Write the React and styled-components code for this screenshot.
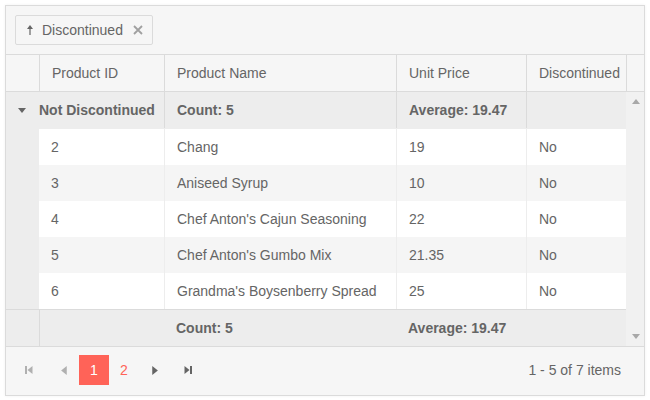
import React from "react";
import styled, { createGlobalStyle } from "styled-components";

const Global = createGlobalStyle`
  html, body { margin: 0; padding: 0; background: #fff; }
  body { padding: 5px; font-family: "Liberation Sans", Arial, sans-serif; font-size: 14px; color: #656565; }
  * { box-sizing: border-box; }
`;

const COLS = "33px 125px 232px 130px 100px";

const Grid = styled.div`
  width: 640px;
  height: 391px;
  border: 1px solid #dbdbdb;
  background: #fff;
  display: flex;
  flex-direction: column;
  box-shadow: 0 0 3px rgba(0,0,0,0.06);
`;

const GroupBar = styled.div`
  height: 49px;
  padding: 9px 9px;
  background: #f6f6f6;
  border-bottom: 1px solid #dbdbdb;
  display: flex;
  align-items: flex-start;
`;

const Chip = styled.div`
  height: 30px;
  width: 138px;
  border: 1px solid #dbdbdb;
  border-radius: 2px;
  background: #f6f6f6;
  display: flex;
  align-items: center;
  padding-left: 10px;
`;

const ChipText = styled.span`
  margin-left: 8px;
  margin-right: 9px;
  color: #656565;
`;

const HeaderRow = styled.div`
  height: 37px;
  display: flex;
  background: #f6f6f6;
  border-bottom: 1px solid #dbdbdb;
`;

const HeadCells = styled.div`
  display: grid;
  grid-template-columns: ${COLS};
  width: 620px;
`;

const HeadCell = styled.div`
  display: flex;
  align-items: center;
  padding-left: 12px;
  border-left: ${(p) => (p.$first ? "none" : "1px solid #dbdbdb")};
  color: #656565;
  white-space: nowrap;
  overflow: hidden;
`;

const HeadScrollSpacer = styled.div`
  width: 18px;
  border-left: 1px solid #dbdbdb;
`;

const Body = styled.div`
  height: 254px;
  display: flex;
`;

const Rows = styled.div`
  width: 620px;
  display: flex;
  flex-direction: column;
`;

const Row = styled.div`
  display: grid;
  grid-template-columns: ${(p) => p.$cols || COLS};
  height: ${(p) => p.$h || 36}px;
  padding-bottom: ${(p) => p.$pb || 0}px;
  background: ${(p) => p.$bg || "#fff"};
  border-top: ${(p) => (p.$topBorder ? "1px solid #dbdbdb" : "none")};
`;

const Cell = styled.div`
  display: flex;
  align-items: center;
  padding-left: ${(p) => (p.$pad ?? 12)}px;
  border-left: ${(p) => (p.$noBorder ? "none" : `1px solid ${p.$bc || "#ededed"}`)};
  background: ${(p) => p.$bg || "transparent"};
  font-weight: ${(p) => (p.$bold ? 700 : 400)};
  white-space: nowrap;
  overflow: hidden;
  color: #656565;
`;

const Scrollbar = styled.div`
  width: 18px;
  background: #f1f1f1;
  display: flex;
  flex-direction: column;
  justify-content: space-between;
  align-items: center;
  padding: 6px 0 6px 2px;
`;

const Pager = styled.div`
  height: 49px;
  border-top: 1px solid #dbdbdb;
  background: #f6f6f6;
  display: flex;
  align-items: center;
  padding: 0 23px 2px 8px;
`;

const PagerNav = styled.div`
  display: flex;
  align-items: center;
`;

const NavButton = styled.div`
  width: 30px;
  height: 30px;
  display: flex;
  align-items: center;
  justify-content: center;
  margin-right: ${(p) => p.$mr || 0}px;
`;

const PageNum = styled.div`
  width: 30px;
  height: 30px;
  display: flex;
  align-items: center;
  justify-content: center;
  font-size: 14px;
  background: ${(p) => (p.$active ? "#ff6358" : "transparent")};
  color: ${(p) => (p.$active ? "#fff" : "#ff6358")};
`;

const PagerInfo = styled.div`
  margin-left: auto;
  color: #656565;
`;

const GroupLabel = styled.span`
  margin-left: 13px;
`;

const ArrowUp = () => (
  <svg width="8" height="12" viewBox="0 0 8 12">
    <path d="M4 1 L1 5 L3.4 5 L3.4 11 L4.6 11 L4.6 5 L7 5 Z" fill="#656565" />
  </svg>
);

const Close = () => (
  <svg width="12" height="12" viewBox="0 0 12 12">
    <path d="M2 2 L10 10 M10 2 L2 10" stroke="#a0a0a0" strokeWidth="1.8" />
  </svg>
);

const Tri = ({ dir = "down", color = "#656565", size = 8 }) => {
  const paths = {
    down: "M0 2 L8 2 L4 7 Z",
    up: "M0 6 L8 6 L4 1 Z",
    left: "M6 0 L6 8 L1 4 Z",
    right: "M2 0 L2 8 L7 4 Z",
  };
  return (
    <svg width={size} height={size} viewBox="0 0 8 8">
      <path d={paths[dir]} fill={color} />
    </svg>
  );
};

const FirstIcon = ({ color }) => (
  <svg width="10" height="10" viewBox="0 0 10 10">
    <rect x="1" y="1" width="2" height="8" fill={color} />
    <path d="M8.5 1 L8.5 9 L3.5 5 Z" fill={color} />
  </svg>
);
const LastIcon = ({ color }) => (
  <svg width="10" height="10" viewBox="0 0 10 10">
    <rect x="7" y="1" width="2" height="8" fill={color} />
    <path d="M1.5 1 L1.5 9 L6.5 5 Z" fill={color} />
  </svg>
);

const data = [
  { id: 2, name: "Chang", price: "19", disc: "No" },
  { id: 3, name: "Aniseed Syrup", price: "10", disc: "No" },
  { id: 4, name: "Chef Anton's Cajun Seasoning", price: "22", disc: "No" },
  { id: 5, name: "Chef Anton's Gumbo Mix", price: "21.35", disc: "No" },
  { id: 6, name: "Grandma's Boysenberry Spread", price: "25", disc: "No" },
];

export default function App() {
  return (
    <>
      <Global />
      <Grid>
        <GroupBar>
          <Chip>
            <ArrowUp />
            <ChipText>Discontinued</ChipText>
            <Close />
          </Chip>
        </GroupBar>
        <HeaderRow>
          <HeadCells>
            <HeadCell $first />
            <HeadCell>Product ID</HeadCell>
            <HeadCell>Product Name</HeadCell>
            <HeadCell>Unit Price</HeadCell>
            <HeadCell>Discontinued</HeadCell>
          </HeadCells>
          <HeadScrollSpacer />
        </HeaderRow>
        <Body>
          <Rows>
            <Row $bg="#ededed" $h={37} $pb={1} $cols="158px 232px 130px 100px">
              <Cell $noBorder $pad={12} $bold>
                <Tri dir="down" color="#656565" />
                <GroupLabel>Not Discontinued</GroupLabel>
              </Cell>
              <Cell $bold $bc="#dbdbdb">Count: 5</Cell>
              <Cell $bold $bc="#dbdbdb">Average: 19.47</Cell>
              <Cell $bc="#dbdbdb" />
            </Row>
            {data.map((r, i) => (
              <Row key={r.id} $bg={i % 2 ? "#f5f5f5" : "#fff"}>
                <Cell $noBorder $bg="#ededed" />
                <Cell $noBorder>{r.id}</Cell>
                <Cell>{r.name}</Cell>
                <Cell>{r.price}</Cell>
                <Cell>{r.disc}</Cell>
              </Row>
            ))}
            <Row $bg="#ededed" $h={37} $topBorder>
              <Cell $noBorder />
              <Cell $bc="#dbdbdb" />
              <Cell $bold $noBorder>Count: 5</Cell>
              <Cell $bold $noBorder>Average: 19.47</Cell>
              <Cell $noBorder />
            </Row>
          </Rows>
          <Scrollbar>
            <Tri dir="up" color="#a8a8a8" size={8} />
            <Tri dir="down" color="#a8a8a8" size={8} />
          </Scrollbar>
        </Body>
        <Pager>
          <PagerNav>
            <NavButton $mr={5}><FirstIcon color="#b0b0b0" /></NavButton>
            <NavButton><Tri dir="left" color="#b0b0b0" size={9} /></NavButton>
            <PageNum $active>1</PageNum>
            <PageNum>2</PageNum>
            <NavButton $mr={4}><Tri dir="right" color="#656565" size={9} /></NavButton>
            <NavButton><LastIcon color="#656565" /></NavButton>
          </PagerNav>
          <PagerInfo>1 - 5 of 7 items</PagerInfo>
        </Pager>
      </Grid>
    </>
  );
}
